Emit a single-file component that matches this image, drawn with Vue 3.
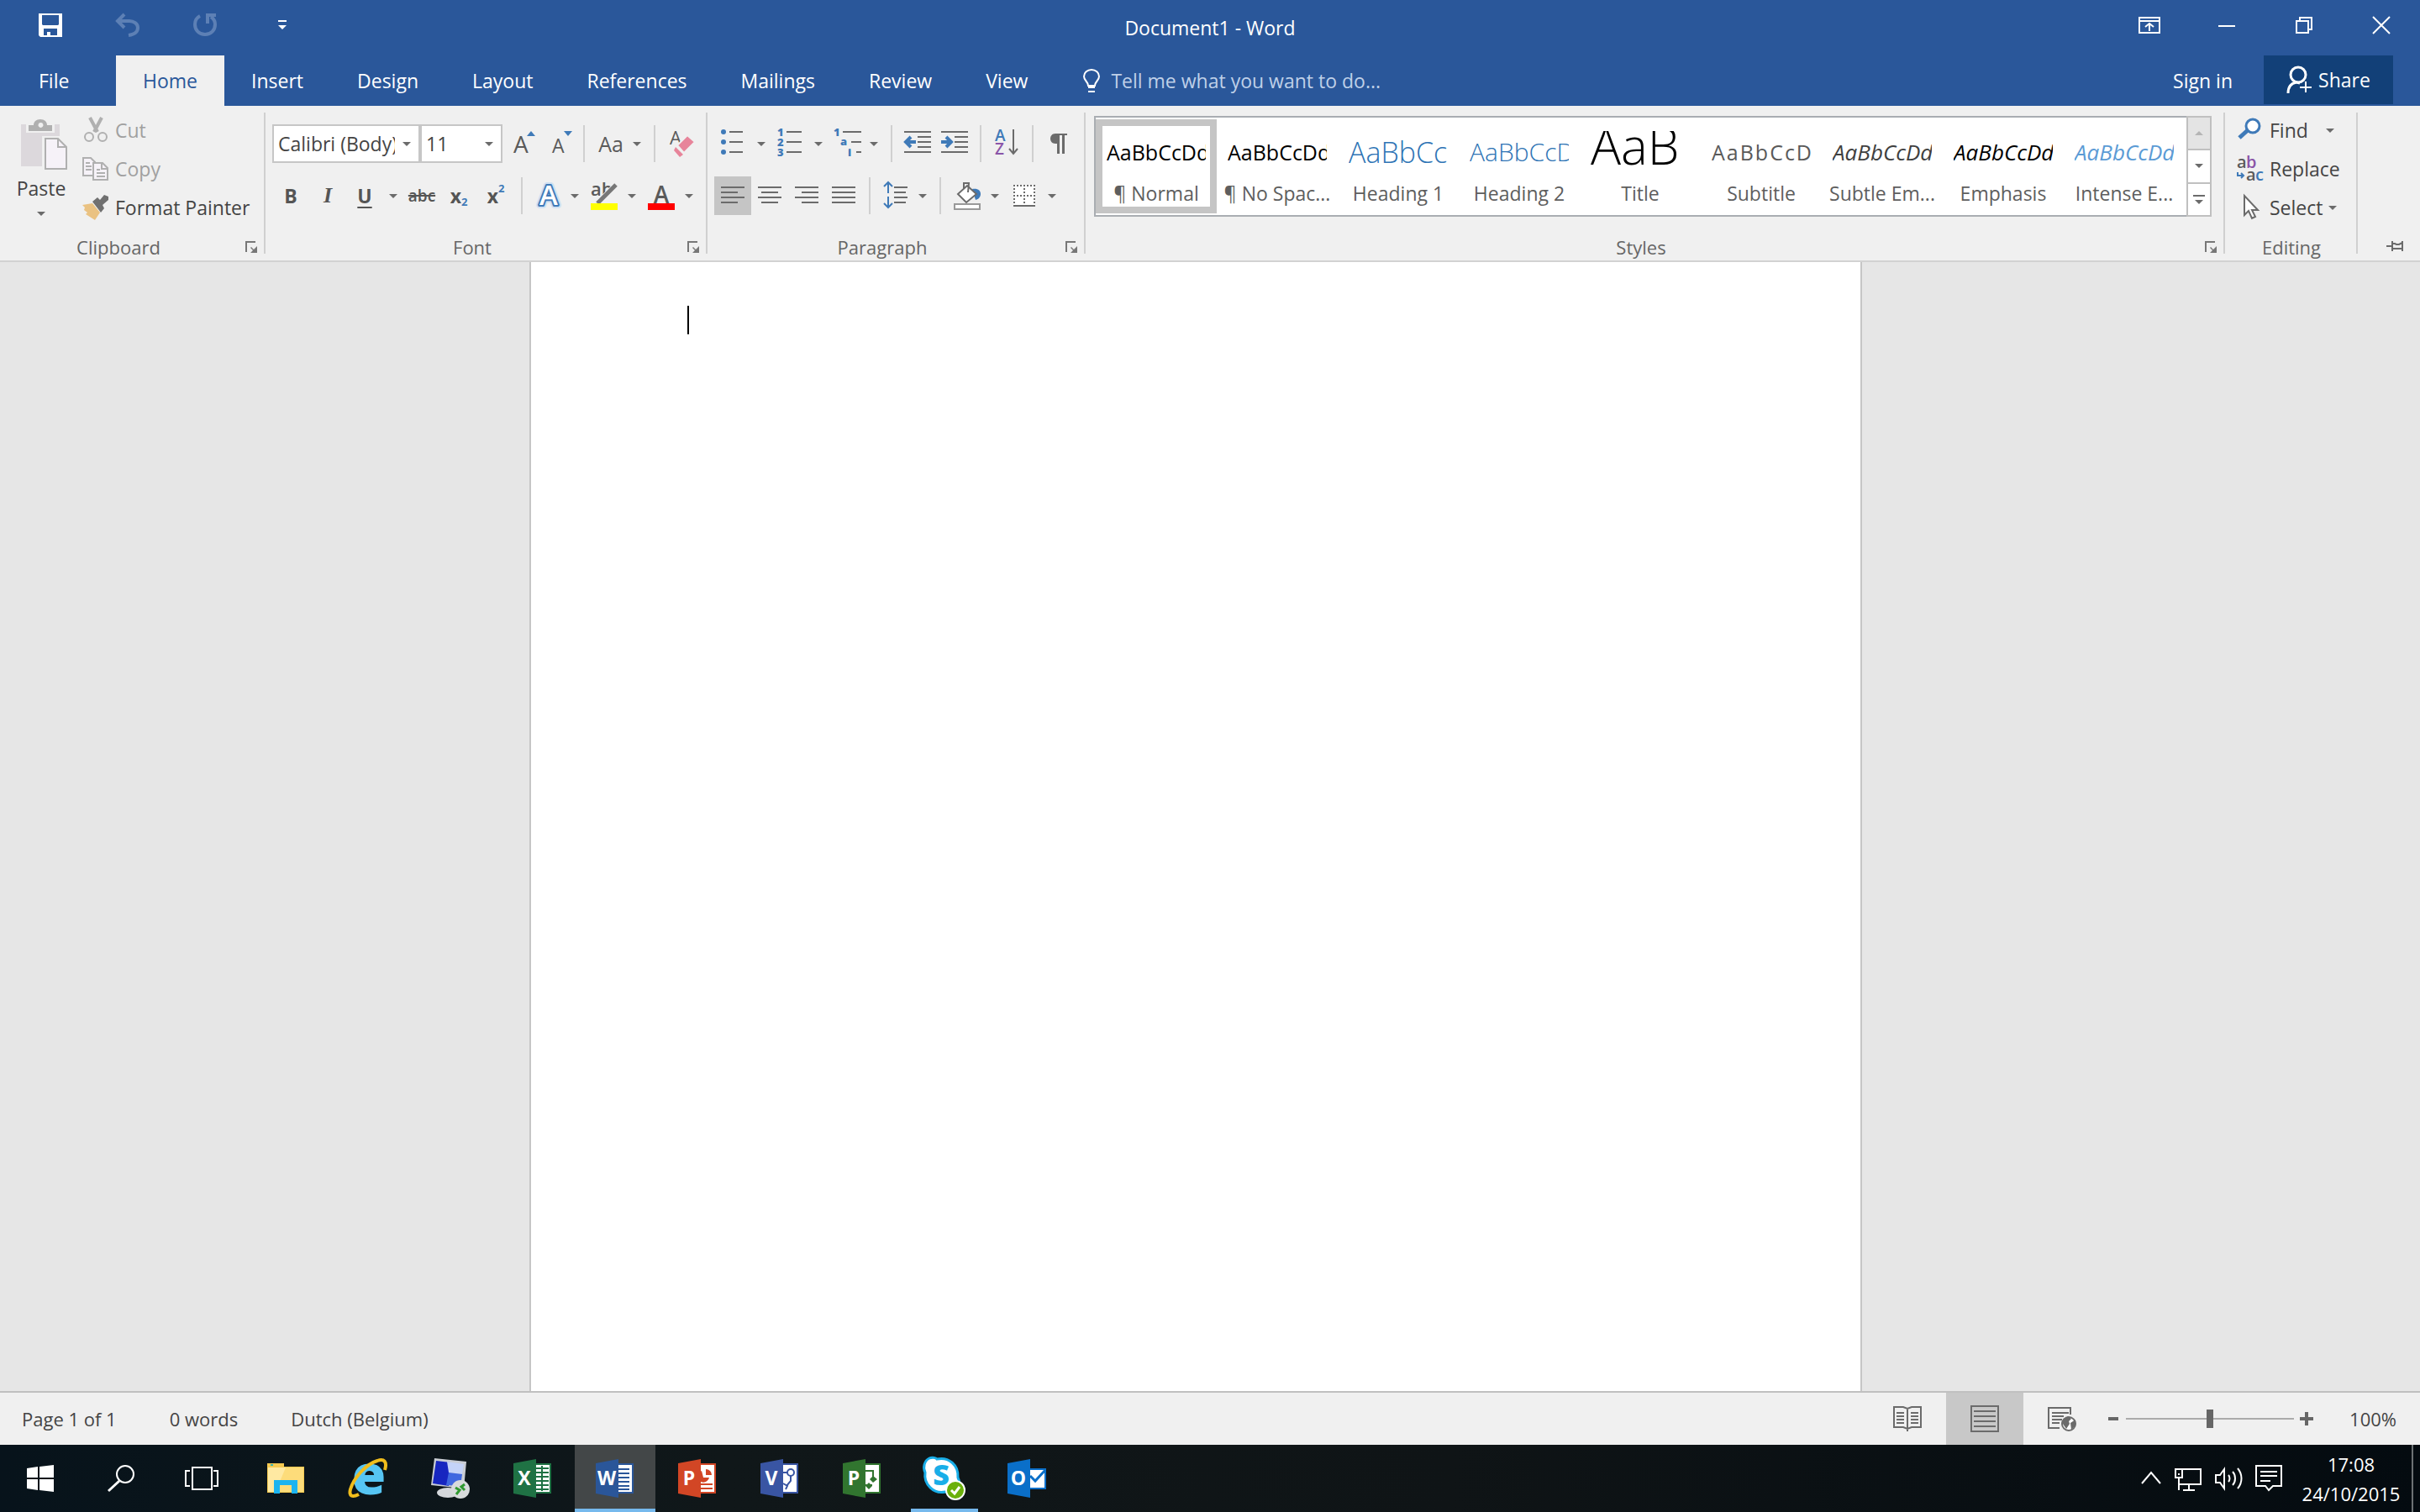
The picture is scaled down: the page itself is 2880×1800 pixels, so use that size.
<script setup>
import { ref } from 'vue'

const tabs = ['Insert', 'Design', 'Layout', 'References', 'Mailings', 'Review', 'View']

const styles = [
  { label: '¶ Normal', sample: 'AaBbCcDd', kind: 'normal', selected: true },
  { label: '¶ No Spac...', sample: 'AaBbCcDd', kind: 'normal' },
  { label: 'Heading 1', sample: 'AaBbCc', kind: 'h1' },
  { label: 'Heading 2', sample: 'AaBbCcD', kind: 'h2' },
  { label: 'Title', sample: 'AaB', kind: 'title' },
  { label: 'Subtitle', sample: 'AaBbCcD', kind: 'subtitle' },
  { label: 'Subtle Em...', sample: 'AaBbCcDd', kind: 'subtle' },
  { label: 'Emphasis', sample: 'AaBbCcDd', kind: 'emphasis' },
  { label: 'Intense E...', sample: 'AaBbCcDd', kind: 'intense' }
]

const aligns = [
  { name: 'Align Left', d: 'M2 13h28M2 19h20M2 25h28M2 31h20', selected: true },
  { name: 'Center', d: 'M2 13h28M6 19h20M2 25h28M6 31h20' },
  { name: 'Align Right', d: 'M2 13h28M10 19h20M2 25h28M10 31h20' },
  { name: 'Justify', d: 'M2 13h28M2 19h28M2 25h28M2 31h28' }
]

const officeApps = [
  { id: 'excel', letter: 'X', color: '#1f7244' },
  { id: 'word', letter: 'W', color: '#2a5699', active: true },
  { id: 'powerpoint', letter: 'P', color: '#d24625' },
  { id: 'visio', letter: 'V', color: '#3955a3' },
  { id: 'project', letter: 'P', color: '#31752f' }
]

const fontName = ref('Calibri (Body)')
const fontSize = ref('11')
const zoom = ref(50)
</script>

<template>
  <div class="app">
    <header class="titlebar">
      <div class="quick">
        <button aria-label="Save">
          <svg width="28" height="28" viewBox="0 0 28 28"><path fill="#fff" fill-rule="evenodd" d="M0 0h28v28H2l-2-2zM4 2v11l1 1h18l1-1V2zM6 18v8h4v-4h4v4h8v-8z" /></svg>
        </button>
        <button aria-label="Undo">
          <svg width="30" height="28" viewBox="0 0 30 28" fill="none" stroke="#5d80b5" stroke-width="4"><path d="M3 9h14c5 0 10 3 10 8s-4 8-11 9" /><path d="M11 1L3 9l8 8" /></svg>
        </button>
        <button aria-label="Repeat">
          <svg width="30" height="28" viewBox="0 0 30 28" fill="none" stroke="#5d80b5" stroke-width="4"><path d="M9 3C5 5 3 9 3 13c0 7 5 12 12 12s12-5 12-12c0-4-2-7-5-9" /><path d="M18 12V2h10" /></svg>
        </button>
        <button aria-label="Customize Quick Access Toolbar">
          <svg width="10" height="14" viewBox="0 0 10 14" fill="#fff"><path d="M0 1h10v2H0zM0 7h10l-5 5z" /></svg>
        </button>
      </div>
      <h1>Document1 - Word</h1>
      <div class="window-controls">
        <button aria-label="Ribbon Display Options">
          <svg width="26" height="20" viewBox="0 0 26 20" fill="none" stroke="#fff" stroke-width="2"><path d="M1 1h24v18H1zM1 5h24M13 17V8M8 12l5-4 5 4" /></svg>
        </button>
        <button aria-label="Minimize">
          <svg width="20" height="20" viewBox="0 0 20 20"><path fill="#fff" d="M0 10h20v2H0z" /></svg>
        </button>
        <button aria-label="Restore Down">
          <svg width="20" height="20" viewBox="0 0 20 20" fill="none" stroke="#fff" stroke-width="2"><path d="M1 5h14v14H1zM5 5V1h14v14h-4" /></svg>
        </button>
        <button aria-label="Close">
          <svg width="20" height="20" viewBox="0 0 20 20" stroke="#fff" stroke-width="2"><path d="M0 0l20 20M20 0L0 20" /></svg>
        </button>
      </div>
    </header>

    <nav class="tabs">
      <button class="tab file">File</button>
      <button class="tab active">Home</button>
      <button v-for="t in tabs" :key="t" class="tab">{{ t }}</button>
      <label class="tell">
        <svg width="20" height="28" viewBox="0 0 20 28" fill="none" stroke="#fff" stroke-width="2"><path d="M6 20c0-5-5-6-5-11a9 8 0 0 1 18 0c0 5-5 6-5 11z" /><path d="M6 22h8M6 27h8" /></svg>
        <input type="text" placeholder="Tell me what you want to do..." />
      </label>
      <button class="signin">Sign in</button>
      <button class="share">
        <svg width="30" height="32" viewBox="0 0 30 32" fill="none" stroke="#fff" stroke-width="3"><circle cx="14" cy="10" r="9" /><path d="M2 32c0-8 4-12 10-13l4 1" /><path stroke-width="2" d="M23 18v13M16 25h14" /></svg>
        <span>Share</span>
      </button>
    </nav>

    <section class="ribbon">
      <div class="group clipboard">
        <div class="body">
          <button class="paste">
            <svg width="60" height="60" viewBox="-2 0 60 60">
              <path fill="#dcd8dc" d="M4 6h46v50H4z" />
              <path fill="#f0f0f0" d="M10 4h34v12H10z" />
              <path fill="#b0b0b0" fill-rule="evenodd" d="M13 14V7h6c0-4 3-7 8-7s8 3 8 7h6v7zM27 4a3 3 0 1 0 1 0z" />
              <path fill="#f0f0f0" d="M29 20h31v40H29z" />
              <path fill="#f6f2f8" stroke="#b0b0b0" stroke-width="2" d="M33 23h15l10 10v26H33z" />
              <path fill="none" stroke="#b0b0b0" stroke-width="2" d="M48 23v10h10" />
            </svg>
            <span>Paste</span>
            <i class="arrow"></i>
          </button>
          <div class="commands">
            <button class="dim">
              <svg width="32" height="32" viewBox="0 0 32 32" fill="none" stroke="#b0b0b0"><path stroke-width="4" d="M9 1l9 17M23 1l-9 17" /><circle cx="8" cy="24" r="5" stroke-width="2" /><circle cx="24" cy="24" r="5" stroke-width="2" /></svg>
              <span>Cut</span>
            </button>
            <button class="dim">
              <svg width="32" height="32" viewBox="0 0 32 32" fill="#f6f2f8" stroke="#b0b0b0" stroke-width="2"><path d="M1 3h9l5 5v16H1z" /><path d="M4 9h5M4 13h7M4 17h7" /><path d="M13 9h11l6 6v14H13z" /><path fill="none" d="M23 9v7h7M17 17h4M17 21h10M17 25h10" /></svg>
              <span>Copy</span>
            </button>
            <button>
              <svg width="32" height="32" viewBox="0 0 32 32"><path fill="#eac282" d="M0 13l12-2 9 11-6 9L4 24l2-2-4-3 1-3z" /><path fill="#707070" d="M12 9l6-5 3 3 5-6 5 2v4l-7 6 2 4-4 5z" /></svg>
              <span>Format Painter</span>
            </button>
          </div>
        </div>
        <div class="caption"><span>Clipboard</span><button class="launcher" aria-label="Clipboard settings"><svg width="14" height="14" viewBox="0 0 14 14"><path fill="#777" d="M0 0h12v2H2v11H0zM14 6v8H6l3-3-3-3 1-1 3 3z" /></svg></button></div>
      </div>

      <div class="group font">
        <div class="body rows">
          <div class="row">
            <div class="combo family"><input v-model="fontName" type="text" aria-label="Font" /><button aria-label="Font list"><i class="arrow"></i></button></div>
            <div class="combo size"><input v-model="fontSize" type="text" aria-label="Font size" /><button aria-label="Size list"><i class="arrow"></i></button></div>
            <button class="tool" aria-label="Increase Font Size"><svg width="32" height="40" viewBox="0 0 32 40"><text x="7" y="31" font-size="28" font-weight="500" class="glyph">A</text><path fill="#3f7ab8" d="M23 11l5-6 5 6z" /></svg></button>
            <button class="tool" aria-label="Decrease Font Size"><svg width="32" height="40" viewBox="0 0 32 40"><text x="9" y="31" font-size="23" font-weight="500" class="glyph">A</text><path fill="#3f7ab8" d="M23 5l5 6 5-6z" /></svg></button>
            <i class="sep"></i>
            <button class="split tight" aria-label="Change Case"><span class="aa">Aa</span><i class="arrow"></i></button>
            <i class="sep"></i>
            <button class="tool" aria-label="Clear All Formatting"><svg width="32" height="40" viewBox="0 0 32 40"><text x="3" y="21" font-size="22" font-weight="500" class="glyph">A</text><path fill="#e7849a" stroke="#f0f0f0" stroke-width="2" d="M12 22l12-12 9 8-13 13z" /><path fill="#e7849a" d="M10 24l9 9-4 3-7-8z" /></svg></button>
          </div>
          <div class="row">
            <button class="tool b">B</button>
            <button class="tool i">I</button>
            <button class="tool u">U</button>
            <button class="drop" aria-label="Underline styles"><i class="arrow"></i></button>
            <button class="tool strike">abc</button>
            <button class="tool b">x<sub>2</sub></button>
            <button class="tool b">x<sup>2</sup></button>
            <i class="sep"></i>
            <button class="split tight" aria-label="Text Effects"><svg width="32" height="40" viewBox="0 0 32 40"><g font-size="33" font-weight="600" text-anchor="middle" fill="#fff" paint-order="stroke" stroke-linejoin="round"><text x="16" y="31" stroke="#cfe0f2" stroke-width="8">A</text><text x="16" y="31" stroke="#3f7ab8" stroke-width="4">A</text></g></svg><i class="arrow"></i></button>
            <button class="split" aria-label="Text Highlight Color"><svg width="32" height="40" viewBox="0 0 32 40"><text x="0" y="20" font-size="22" font-weight="600" class="glyph">ab</text><path stroke="#f0f0f0" stroke-width="8" d="M12 26L30 8" /><path stroke="#777" stroke-width="5" d="M8 29L30 7" /><path fill="#ff0" d="M0 29h32v8H0z" /></svg><i class="arrow"></i></button>
            <button class="split" aria-label="Font Color"><svg width="32" height="40" viewBox="0 0 32 40"><text x="16" y="29" font-size="28" font-weight="600" text-anchor="middle" class="glyph">A</text><path fill="red" d="M0 29h32v8H0z" /></svg><i class="arrow"></i></button>
          </div>
        </div>
        <div class="caption"><span>Font</span><button class="launcher" aria-label="Font settings"><svg width="14" height="14" viewBox="0 0 14 14"><path fill="#777" d="M0 0h12v2H2v11H0zM14 6v8H6l3-3-3-3 1-1 3 3z" /></svg></button></div>
      </div>

      <div class="group paragraph">
        <div class="body rows">
          <div class="row">
            <button class="split" aria-label="Bullets"><svg width="32" height="40" viewBox="0 0 32 40"><g fill="#3f7ab8"><circle cx="4" cy="6" r="3" /><circle cx="4" cy="18" r="3" /><circle cx="4" cy="30" r="3" /></g><path class="line" d="M11 6h16M11 18h16M11 30h16" /></svg><i class="arrow"></i></button>
            <button class="split" aria-label="Numbering"><svg width="32" height="40" viewBox="0 0 32 40"><g class="num" font-size="13"><text x="0" y="11">1</text><text x="0" y="23">2</text><text x="0" y="35">3</text></g><path class="line" d="M11 6h18M11 18h18M11 30h18" /></svg><i class="arrow"></i></button>
            <button class="split tight" aria-label="Multilevel List"><svg width="32" height="40" viewBox="0 0 32 40"><g class="num" font-size="13"><text x="-1" y="11">1</text><text x="7" y="22">a</text><text x="16" y="35">i</text></g><path class="line" d="M10 6h22M20 18h12M26 30h6" /></svg><i class="arrow"></i></button>
            <i class="sep"></i>
            <button class="tool" aria-label="Decrease Indent"><svg width="32" height="40" viewBox="0 0 32 40"><path class="line" d="M0 6h32M16 12h16M16 18h16M16 24h16M0 30h32" /><path class="blue" d="M2 18h12M8 12l-6 6 6 6" /></svg></button>
            <button class="tool" aria-label="Increase Indent"><svg width="32" height="40" viewBox="0 0 32 40"><path class="line" d="M0 6h32M16 12h16M16 18h16M16 24h16M0 30h32" /><path class="blue" d="M0 18h12M6 12l6 6-6 6" /></svg></button>
            <i class="sep"></i>
            <button class="tool" aria-label="Sort"><svg width="32" height="40" viewBox="0 0 32 40"><text x="2" y="17" font-size="19" font-weight="600" fill="#3f7ab8">A</text><text x="2" y="33" font-size="19" font-weight="600" fill="#8a55a8">Z</text><path class="line" d="M24 3v28M19 26l5 6 5-6" /></svg></button>
            <i class="sep"></i>
            <button class="tool" aria-label="Show paragraph marks"><svg width="20" height="40" viewBox="0 0 20 40"><path fill="#6b6b6b" d="M20 8v2h-3v22h-3V10h-3v22H8V20H6C2 20 0 17 0 14s2-6 6-6z" /></svg></button>
          </div>
          <div class="row">
            <button v-for="a in aligns" :key="a.name" class="tool" :class="{ selected: a.selected }" :aria-label="a.name"><svg width="32" height="46" viewBox="0 0 32 46"><path class="line" :d="a.d" /></svg></button>
            <i class="sep"></i>
            <button class="split tight" aria-label="Line Spacing"><svg width="32" height="40" viewBox="0 0 32 40"><path class="line" d="M13 10h16M13 16h14M13 22h16M13 28h14" /><path stroke="#3f7ab8" stroke-width="2" fill="none" d="M6 4v13M1 9l5-5 5 5M6 21v13M1 29l5 5 5-5" /></svg><i class="arrow"></i></button>
            <i class="sep"></i>
            <button class="split" aria-label="Shading"><svg width="32" height="40" viewBox="0 0 32 40"><path fill="#3f7ab8" d="M22 12c7-1 10 2 10 6 0 3-2 6-6 7z" /><path fill="#fff" stroke="#6b6b6b" stroke-width="2" d="M16 8l11 10-12 10L5 18z" /><path fill="none" stroke="#6b6b6b" stroke-width="2" d="M12 12V5h6l-1 11" /><path fill="#fff" stroke="#999" stroke-width="2" d="M1 30h30v6H1z" /></svg><i class="arrow"></i></button>
            <button class="split" aria-label="Borders"><svg width="32" height="40" viewBox="0 0 32 40"><path fill="#fff" d="M3 7h26v24H3z" /><path fill="none" stroke="#6b6b6b" stroke-width="2" stroke-dasharray="2 2" d="M3 8h26M3 20h26M4 7v24M16 7v24M28 7v24" /><path class="line" d="M3 32h26" /></svg><i class="arrow"></i></button>
          </div>
        </div>
        <div class="caption"><span>Paragraph</span><button class="launcher" aria-label="Paragraph settings"><svg width="14" height="14" viewBox="0 0 14 14"><path fill="#777" d="M0 0h12v2H2v11H0zM14 6v8H6l3-3-3-3 1-1 3 3z" /></svg></button></div>
      </div>

      <div class="group styles">
        <div class="body gallery">
          <div class="cards">
            <button v-for="s in styles" :key="s.label" class="card" :class="[s.kind, { selected: s.selected }]">
              <span class="sample">{{ s.sample }}</span>
              <span class="label">{{ s.label }}</span>
            </button>
          </div>
          <div class="scroller">
            <button disabled aria-label="Previous styles"><i class="arrow up"></i></button>
            <button aria-label="Next styles"><i class="arrow"></i></button>
            <button class="more" aria-label="More styles"><i class="bar"></i><i class="arrow"></i></button>
          </div>
        </div>
        <div class="caption"><span>Styles</span><button class="launcher" aria-label="Styles pane"><svg width="14" height="14" viewBox="0 0 14 14"><path fill="#777" d="M0 0h12v2H2v11H0zM14 6v8H6l3-3-3-3 1-1 3 3z" /></svg></button></div>
      </div>

      <div class="group editing">
        <div class="body">
          <div class="commands">
            <button>
              <svg width="32" height="32" viewBox="0 0 32 32" stroke="#3f7ab8"><path stroke-width="5" d="M3 25l10-9" /><circle cx="19" cy="11" r="8" fill="#fff" stroke-width="3" /></svg>
              <span class="find">Find</span><i class="arrow"></i>
            </button>
            <button>
              <svg width="32" height="32" viewBox="0 0 32 32" font-weight="600"><text x="0" y="15" font-size="20" class="glyph">a</text><text x="11" y="15" font-size="20" fill="#8a55a8">b</text><text x="11" y="30" font-size="20" class="glyph">a</text><text x="22" y="30" font-size="20" fill="#3f7ab8">c</text><path fill="none" stroke="#3f7ab8" stroke-width="2" d="M1 20v4h6M5 21l3 3-3 3" /></svg>
              <span>Replace</span>
            </button>
            <button>
              <svg width="32" height="32" viewBox="0 0 32 32" fill="#fff" stroke="#6b6b6b" stroke-width="2"><path d="M9 2v23l5-5 4 9 4-2-4-8h7z" /></svg>
              <span class="select">Select</span><i class="arrow"></i>
            </button>
          </div>
        </div>
        <div class="caption"><span>Editing</span></div>
      </div>

      <button class="pin" aria-label="Pin the ribbon"><svg width="20" height="14" viewBox="0 0 20 14" fill="none" stroke="#6b6b6b" stroke-width="2"><path d="M0 7h6M7 1v12M19 1v12M7 4h3l2 1h3l4-2M7 10h12" /></svg></button>
    </section>

    <main class="workspace">
      <article class="page"><div class="caret"></div></article>
    </main>

    <footer class="status">
      <span>Page 1 of 1</span>
      <span>0 words</span>
      <span>Dutch (Belgium)</span>
      <div class="view-tools">
        <button class="view" aria-label="Read Mode"><svg width="34" height="32" viewBox="0 0 34 32" fill="none" stroke="#6b6b6b" stroke-width="2"><path d="M1 2h11l5 2 5-2h11v24H22l-5 2-5-2H1zM17 4v27M4 9h9M4 13h9M4 17h9M4 21h9M21 9h9M21 13h9M21 17h9M21 21h9" /></svg></button>
        <button class="view selected" aria-label="Print Layout"><svg width="34" height="32" viewBox="0 0 34 32" fill="none" stroke="#6b6b6b" stroke-width="2"><path d="M1 1h32v30H1zM4 7h26M4 13h26M4 19h26M4 25h26" /></svg></button>
        <button class="view" aria-label="Web Layout"><svg width="34" height="32" viewBox="0 0 34 32" fill="none" stroke="#6b6b6b" stroke-width="2"><path d="M14 27H1V3h26v8M5 9h20M5 13h14M5 17h12M5 21h9" /><circle cx="25" cy="22" r="8" fill="#fff" /><path fill="#6b6b6b" stroke="none" d="M18 17l6-4 4 3-3 3 1 3-4 6-4-6zM27 21l6-4v7l-5 5z" /></svg></button>
        <button class="zoom" aria-label="Zoom out"><svg width="12" height="16" viewBox="0 0 12 16"><path fill="#666" d="M0 6h12v4H0z" /></svg></button>
        <input v-model="zoom" type="range" min="0" max="100" aria-label="Zoom" />
        <button class="zoom" aria-label="Zoom in"><svg width="16" height="16" viewBox="0 0 16 16"><path fill="#666" d="M0 6h6V0h4v6h6v4h-6v6H6v-6H0z" /></svg></button>
        <span class="percent">100%</span>
      </div>
    </footer>

    <div class="taskbar">
      <button class="sys" aria-label="Start"><svg width="32" height="32" viewBox="0 0 32 32" fill="#fff"><path d="M0 4l13-2v13H0zM15 2l17-2v15H15zM0 17h13v13L0 28zM15 17h17v15l-17-2z" /></svg></button>
      <button class="sys" aria-label="Search"><svg width="32" height="32" viewBox="0 0 32 32" fill="none" stroke="#fff" stroke-width="2"><circle cx="21" cy="11" r="10" /><path d="M14 19L1 31" stroke-width="3" /></svg></button>
      <button class="sys" aria-label="Task View"><svg width="40" height="28" viewBox="0 0 40 28" fill="none" stroke="#fff" stroke-width="2"><path d="M9 1h23v26H9zM6 5H1v18h5M34 5h5v18h-5" /></svg></button>
      <div class="apps">
        <button aria-label="File Explorer"><svg width="44" height="38" viewBox="0 0 44 38"><path fill="#f5c951" d="M0 1h20v4h24v31H0z" /><path fill="#ffe9a2" d="M1 6h42v29H1z" /><path fill="#fddc7a" d="M22 6h21v29H10z" /><path fill="#37b5b0" d="M4 2h3v2H4z" /><path fill="#1cb4f0" d="M8 21h28v16h-7V27H15v10H8z" /></svg></button>
        <button aria-label="Internet Explorer"><svg width="46" height="48" viewBox="0 0 46 48"><text x="24" y="43" text-anchor="middle" font-size="66" font-weight="800" fill="#56c5f3">e</text><path fill="none" stroke="#f0bd1c" stroke-width="4" d="M43 14C46 4 42 0 34 3 21 7 6 23 2 37c-2 8 2 10 10 6" /></svg></button>
        <button aria-label="Remote Desktop"><svg width="46" height="48" viewBox="0 0 46 48"><ellipse cx="20" cy="41" rx="13" ry="6" fill="#d5d8dc" /><path fill="#c9cdd4" d="M4 0l38 4-3 32-39-4z" /><path fill="#1726c0" d="M6 3l17 2-2 28-19-3z" /><path fill="#c4d3f8" d="M19 4l20 3-2 12-16-2z" /><path fill="#3f68e0" d="M21 17l16 2-2 14-17-1z" /><circle cx="35" cy="37" r="11" fill="#d8dbdc" /><path fill="none" stroke="#319a31" stroke-width="3" d="M29 35l5 3-4 5M40 31l-4 3 4 4" /></svg></button>
        <button v-for="a in officeApps" :key="a.id" :class="{ active: a.active }" :aria-label="a.id">
          <svg width="46" height="46" viewBox="0 0 46 46">
            <path fill="#fff" stroke-width="2" :stroke="a.color" d="M26 6h18v34H26z" />
            <path v-if="a.id === 'excel'" fill="none" :stroke="a.color" stroke-width="2" d="M27 11h15M27 16h15M27 21h15M27 26h15M27 31h15M27 36h15M34 8v30" />
            <path v-if="a.id === 'word'" fill="none" :stroke="a.color" stroke-width="2" d="M27 12h13M27 17h13M27 22h13M27 27h13M27 32h13M27 36h13" />
            <g v-if="a.id === 'powerpoint'"><path :fill="a.color" d="M28 14a7 7 0 1 0 9 8h-7z" /><path :fill="a.color" d="M33 12a7 7 0 0 1 7 7h-7zM27 29h14v2H27zM27 34h14v2H27z" /></g>
            <g v-if="a.id === 'visio'" fill="none" :stroke="a.color" stroke-width="2"><circle cx="36" cy="16" r="4" /><path d="M27 16h5M36 20v6l-5 6M27 29l5 3-2 4" /></g>
            <g v-if="a.id === 'project'"><path fill="none" :stroke="a.color" stroke-width="2" d="M27 14h9v12M27 31h8" /><path :fill="a.color" d="M36 20l5 4-5 4-4-4zM31 28l4 4-4 4-4-4z" /></g>
            <path :fill="a.color" d="M0 5l27-5v46L0 41z" />
            <text x="13" y="31" text-anchor="middle" font-size="23" font-weight="700" fill="#fff">{{ a.letter }}</text>
          </svg>
        </button>
        <button class="running" aria-label="Skype for Business"><svg width="52" height="52" viewBox="0 0 52 52"><path fill="#fff" stroke="#19aee8" stroke-width="3" d="M8 2c4-2 8 0 9 1 14-3 26 7 25 22 2 4 3 10-1 14-4 5-10 5-14 3C13 45 1 33 3 19 0 13 2 5 8 2z" /><text x="22" y="34" text-anchor="middle" font-size="34" font-weight="800" fill="#19aee8">S</text><circle cx="39" cy="40" r="11" fill="#6bb00b" stroke="#fff" stroke-width="2" /><path fill="none" stroke="#fff" stroke-width="3" d="M34 40l4 4 6-8" /></svg></button>
        <button aria-label="Outlook"><svg width="46" height="46" viewBox="0 0 46 46"><path fill="#fff" stroke="#0a6fc9" stroke-width="2" d="M26 12h19v23H26z" /><path fill="none" stroke="#0a6fc9" stroke-width="3" d="M27 20l6 6 12-13" /><path fill="#0a6fc9" d="M0 5l27-5v46L0 41z" /><text x="13" y="31" text-anchor="middle" font-size="23" font-weight="700" fill="#fff">O</text></svg></button>
      </div>
      <div class="tray">
        <button aria-label="Show hidden icons"><svg width="24" height="32" viewBox="0 0 24 32" fill="none" stroke="#fff" stroke-width="2"><path d="M1 22L12 9l11 13" /></svg></button>
        <button aria-label="Network"><svg width="32" height="32" viewBox="0 0 32 32" fill="none" stroke="#fff" stroke-width="2"><path d="M9 5h22v18H5V15M17 23v6M10 30h14M5 15v15M1 5h8v10H1z" /><path d="M4 11h2" /></svg></button>
        <button aria-label="Volume"><svg width="32" height="32" viewBox="0 0 32 32" fill="none" stroke="#fff" stroke-width="2"><path d="M1 12h5l5-7v23l-5-7H1z" /><path d="M16 12c2 2 2 6 0 8M21 8c4 4 4 12 0 16M27 4c6 7 6 17 0 24" /></svg></button>
        <button aria-label="Notifications"><svg width="32" height="32" viewBox="0 0 32 32" fill="none" stroke="#fff" stroke-width="2"><path d="M1 1h30v24H21l-5 5-4-5H1zM6 8h20M6 13h20M6 19h12" /></svg></button>
        <div class="clock"><span>17:08</span><span>24/10/2015</span></div>
      </div>
      <button class="desktop" aria-label="Show desktop"></button>
    </div>
  </div>
</template>

<style>
body {
  margin: 0;
}
</style>

<style scoped>
.app {
  display: flex;
  flex-direction: column;
  min-height: 100vh;
  font-family: "Open Sans", "Noto Sans", sans-serif;
  font-size: 23px;
  line-height: 32px;
  color: #444;
}
button,
input {
  font: inherit;
  color: inherit;
  background: none;
  border: 0;
  border-radius: 0;
  margin: 0;
  padding: 0;
  outline: 0;
}
button {
  display: flex;
  align-items: center;
  justify-content: center;
  flex: none;
  white-space: nowrap;
}
svg {
  display: block;
  flex: none;
  overflow: visible;
}
.arrow {
  flex: none;
  border: 5px solid transparent;
  border-top-color: #6b6b6b;
  border-bottom: 0;
}
.glyph {
  fill: #5a5a5a;
}
.line {
  fill: none;
  stroke: #6b6b6b;
  stroke-width: 2;
}
.blue {
  fill: none;
  stroke: #3f7ab8;
  stroke-width: 4;
}
.num {
  fill: #3f7ab8;
  font-weight: 800;
}

/* Title bar */
.titlebar {
  display: grid;
  grid-template-columns: 1fr auto 1fr;
  height: 66px;
  color: #fff;
  background: #2a579a;
}
.titlebar h1 {
  margin: 0;
  align-self: center;
  font-size: 23px;
  font-weight: 400;
}
.quick,
.window-controls {
  display: flex;
}
.quick {
  padding-left: 14px;
}
.window-controls {
  justify-content: flex-end;
}
.quick button,
.window-controls button {
  width: 92px;
  height: 60px;
}

/* Tabs */
.tabs {
  display: flex;
  height: 60px;
  color: #fff;
  background: #2a579a;
}
.tab {
  padding: 0 32px;
}
.tab.file {
  width: 138px;
  padding: 0 0 0 46px;
  justify-content: flex-start;
}
.tab.active {
  color: #2a579a;
  background: #f0f0f0;
}
.tell {
  display: flex;
  flex: 1;
  align-items: center;
  gap: 13px;
  padding-left: 34px;
}
.tell input {
  width: 400px;
}
.tell input::placeholder {
  color: #bfd0e8;
  opacity: 1;
}
.signin {
  padding: 0 37px;
}
.share {
  gap: 8px;
  width: 154px;
  height: 58px;
  margin-right: 32px;
  background: #124078;
}

/* Ribbon */
.ribbon {
  display: flex;
  background: #f0f0f0;
  border-bottom: 2px solid #d2d2d2;
}
.group {
  position: relative;
  display: flex;
  flex: none;
  flex-direction: column;
  box-sizing: border-box;
}
.group::after {
  content: "";
  position: absolute;
  top: 8px;
  right: 0;
  bottom: 8px;
  width: 2px;
  background: #d0d0d0;
}
.clipboard {
  width: 316px;
}
.font {
  width: 526px;
}
.paragraph {
  width: 450px;
}
.styles {
  flex: 1;
  min-width: 0;
}
.editing {
  width: 158px;
}
.body {
  display: flex;
  height: 152px;
  box-sizing: border-box;
}
.caption {
  display: flex;
  align-items: center;
  height: 32px;
  font-size: 22px;
  color: #666;
}
.caption span {
  flex: 1;
  text-align: center;
}
.launcher {
  width: 34px;
}
.paste {
  flex-direction: column;
  justify-content: flex-start;
  width: 98px;
  padding-top: 16px;
}
.paste span {
  margin: 6px 0 12px;
}
.commands {
  display: flex;
  flex-direction: column;
  padding-top: 6px;
}
.commands button {
  gap: 7px;
  height: 46px;
  justify-content: flex-start;
}
.commands .dim {
  color: #a0a0a0;
}
.editing .commands {
  padding-left: 14px;
}
.editing .find {
  margin-right: 14px;
}
.rows {
  flex-direction: column;
  gap: 16px;
  padding: 22px 0 0 8px;
}
.row {
  display: flex;
  align-items: center;
  height: 46px;
}
.combo {
  display: flex;
  box-sizing: border-box;
  height: 46px;
  background: #fff;
  border: 2px solid #c6c6c6;
}
.combo input {
  flex: 1;
  min-width: 0;
  padding-left: 5px;
}
.combo button {
  width: 28px;
}
.family {
  width: 176px;
}
.size {
  width: 98px;
}
.tool {
  width: 44px;
  height: 46px;
  color: #555;
}
.tool.selected {
  background: #c5c5c5;
}
.b {
  font-weight: 700;
}
.b sub,
.b sup {
  font-size: 13px;
  line-height: 16px;
  color: #3f7ab8;
}
.b sub {
  align-self: flex-end;
  margin-bottom: 8px;
}
.b sup {
  align-self: flex-start;
  margin-top: 6px;
}
.i {
  font-family: "Liberation Serif", serif;
  font-size: 26px;
  font-style: italic;
  font-weight: 700;
}
.u {
  font-weight: 700;
  text-decoration: underline;
  text-decoration-thickness: 2px;
  text-underline-offset: 4px;
}
.strike {
  font-size: 19px;
  font-weight: 600;
  text-decoration: line-through;
  text-decoration-thickness: 2px;
}
.drop {
  width: 24px;
  height: 46px;
}
.split {
  gap: 12px;
  height: 46px;
  padding: 0 7px;
}
.split.tight {
  gap: 10px;
}
.aa {
  width: 32px;
  font-size: 25px;
  color: #5a5a5a;
}
.sep {
  width: 2px;
  height: 44px;
  margin: 0 8px;
  background: #d0d0d0;
}

/* Styles gallery */
.gallery {
  padding: 12px 16px 20px 10px;
}
.cards {
  display: flex;
  flex: 1;
  min-width: 0;
  overflow: hidden;
  padding: 2px 0;
  background: #fff;
  border: 2px solid #a9adb2;
  border-right: 0;
}
.card {
  flex-direction: column;
  justify-content: flex-start;
  box-sizing: border-box;
  width: 144px;
  height: 112px;
  padding: 6px 5px 0;
  border: 8px solid transparent;
}
.card.selected {
  border-color: #c5c5c5;
}
.sample {
  flex: none;
  width: 118px;
  height: 50px;
  overflow: hidden;
  font-size: 25px;
  line-height: 50px;
  text-align: left;
  color: #000;
}
.label {
  margin-top: 8px;
  color: #5e5e5e;
}
.h1 .sample {
  font-size: 34px;
  font-weight: 300;
  color: #2e74b5;
}
.h2 .sample {
  font-size: 30px;
  font-weight: 300;
  color: #2e74b5;
}
.title .sample {
  font-size: 60px;
  font-weight: 300;
  line-height: 34px;
}
.subtitle .sample {
  letter-spacing: 2px;
  color: #5a5a5a;
}
.subtle .sample,
.emphasis .sample,
.intense .sample {
  font-size: 26px;
  font-style: italic;
}
.subtle .sample {
  color: #404040;
}
.intense .sample {
  color: #5b9bd5;
}
.scroller {
  display: flex;
  flex-direction: column;
  width: 26px;
  background: #fff;
  border: 2px solid #c0c0c0;
}
.scroller button {
  flex: 1;
  flex-direction: column;
  gap: 4px;
  border-bottom: 2px solid #c0c0c0;
}
.scroller button:disabled {
  background: #e4e4e4;
}
.scroller .more {
  border-bottom: 0;
}
.arrow.up {
  border-top: 0;
  border-bottom: 5px solid #b5b5b5;
}
.bar {
  width: 14px;
  height: 2px;
  background: #6b6b6b;
}
.pin {
  align-self: flex-end;
  width: 74px;
  height: 34px;
  padding-left: 14px;
}

/* Document area */
.workspace {
  display: flex;
  flex: 1;
  justify-content: center;
  padding-right: 34px;
  background: #e6e6e6;
}
.page {
  box-sizing: border-box;
  width: 1586px;
  padding: 52px 186px 0;
  background: #fff;
  border: solid #c6c6c6;
  border-width: 0 2px;
}
.caret {
  width: 2px;
  height: 34px;
  background: #000;
}

/* Status bar */
.status {
  display: flex;
  align-items: center;
  gap: 63px;
  height: 62px;
  padding-left: 26px;
  font-size: 22px;
  background: #f0f0f0;
  border-top: 2px solid #c0c0c0;
}
.view-tools {
  display: flex;
  align-items: center;
  margin-left: auto;
}
.view {
  width: 92px;
  height: 62px;
}
.view.selected {
  background: #c8c8c8;
}
.zoom {
  width: 30px;
  height: 62px;
}
.status input {
  appearance: none;
  width: 200px;
  height: 22px;
  background: linear-gradient(#ababab, #ababab) center / 100% 2px no-repeat;
}
.status input::-webkit-slider-thumb {
  appearance: none;
  width: 8px;
  height: 22px;
  background: #666;
}
.percent {
  width: 92px;
  padding-right: 28px;
  text-align: right;
}

/* Taskbar */
.taskbar {
  display: flex;
  height: 80px;
  color: #fff;
  background: linear-gradient(90deg, #07131b, #101719 30%, #0f1416 60%, #040b10);
}
.sys {
  width: 96px;
}
.apps {
  display: flex;
  gap: 2px;
  padding-left: 4px;
}
.apps button {
  position: relative;
  width: 96px;
}
.apps .active {
  background: #434748;
}
.apps .active::after,
.apps .running::after {
  content: "";
  position: absolute;
  right: 0;
  bottom: 0;
  left: 0;
  height: 4px;
  background: #76b9ed;
}
.apps .running::after {
  right: 8px;
  left: 8px;
}
.tray {
  display: flex;
  gap: 16px;
  margin-left: auto;
}
.clock {
  display: flex;
  flex-direction: column;
  justify-content: center;
  gap: 3px;
  width: 132px;
  padding-right: 6px;
  padding-left: 0;
  font-size: 22px;
  text-align: center;
}
.desktop {
  width: 10px;
  border-left: 2px solid #6c7174;
}
</style>
